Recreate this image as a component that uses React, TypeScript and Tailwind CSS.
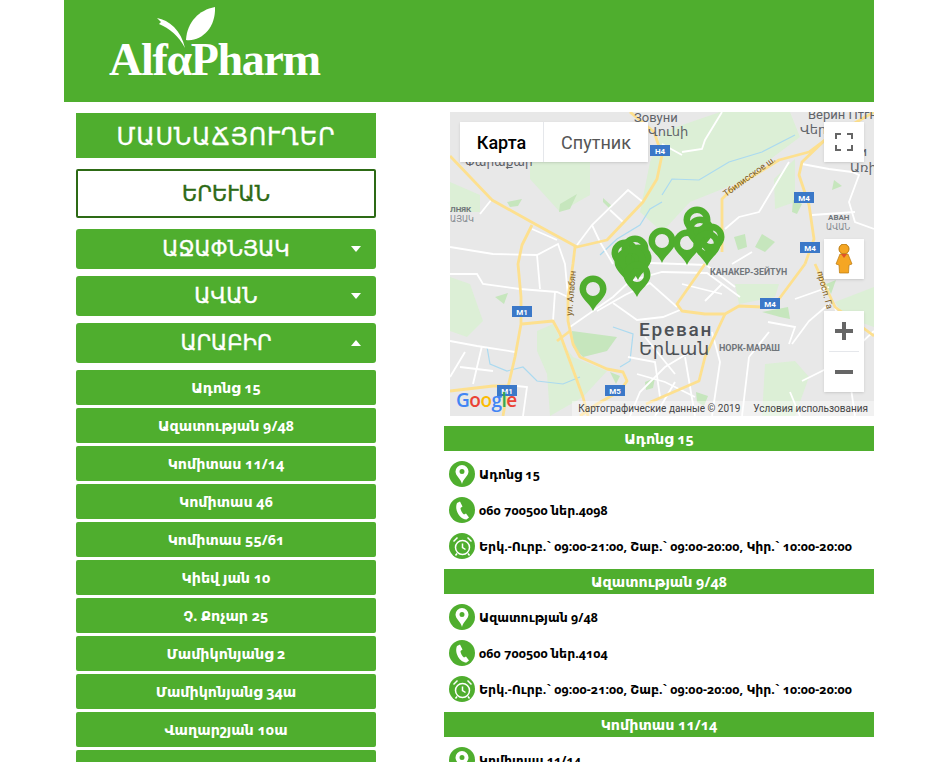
const items = ["Ադոնց 15","Ազատության 9/48","Կոմիտաս 11/14","Կոմիտաս 46","Կոմիտաս 55/61","Կիեվ յան 10","Չ. Քոչար 25","Մամիկոնյանց 2","Մամիկոնյանց 34ա","Վաղարշյան 10ա",""];
const HOURS = "Երկ.-Ուրբ.` 09:00-21:00, Շաբ.` 09:00-20:00, Կիր.` 10:00-20:00";
const stores = [["Ադոնց 15","060 700500 ներ.4098"],["Ազատության 9/48","060 700500 ներ.4104"],["Կոմիտաս 11/14",""]];

function Logo() {
  return (
    <div className="relative w-[214px] h-[80px] ml-[45px] mt-[6px]">
      <svg viewBox="0 0 214 80" className="absolute left-0 top-0 w-[214px] h-[80px]">
        <path d="M48 12 C60 14 72 24 76 42 C70 30 60 22 50 18 L52 16 Z" fill="#fff"/>
        <path d="M106 1 C90 4 78 16 77 34 C92 36 107 22 106 1 Z" fill="#fff"/>
      </svg>
      <span className="absolute left-0 top-[31px] text-[46px] leading-[46px] font-bold tracking-[-1.3px] text-white font-['Liberation_Serif',serif] whitespace-nowrap">AlfαPharm</span>
    </div>
  );
}

function Pin({ x, y }: { x: number; y: number }) {
  return <path transform={`translate(${x} ${y})`} fillRule="evenodd" fill="#4fae2e" d="M0 0C-3-8-13.500-13-13.500-22A13.500 13.500 0 1 1 13.500-22C13.500-13 3-8 0 0ZM0-29A7 7 0 1 0 0-15A7 7 0 1 0 0-29Z"/>;
}

const whites = [
  "M127 133L142 113L178 78L193 90","M142 113L150 130L163 152","M160 98L173 110","M30 102L42 87",
  "M0 135L43 142L87 143L108 132L115 152L118 185","M82 117L107 128","M87 143L90 177",
  "M0 162L27 162L33 172L70 177L107 180L118 185","M105 180L103 209",
  "M120 215L163 185L180 169L212 160L257 161L290 185","M147 199L175 183L200 171L227 195","M163 191L187 208L213 205L230 198","M200 151L257 153",
  "M0 229L27 234L65 240","M0 265L15 240","M32 234L23 272","M10 255L43 259","M67 274L77 275L73 304",
  "M180 304L190 280L215 255L240 240","M187 262L215 270L245 285","M205 304L225 270","M235 245L245 304","M178 245L205 250L210 285","M195 225L225 262",
  "M318 210L345 215L339 232","M299 245L319 220","M292 304L299 245","M342 232L359 209L379 192","M345 187L379 175","M352 269L392 249L424 219",
  "M232 40L252 37L255 28L272 0","M212 32L232 43","M275 117L289 105L309 100L339 50","M352 52L379 57L402 60L409 63L399 90L405 110L424 117","M362 103L405 100","M282 152L302 140",
  "M232 172L272 182","M255 152L285 175","M272 172L255 189","M340 280L350 304","M385 195L395 235L405 304","M262 220L270 250L262 304",
];
const yellows = [
  "M0 44L42 88L85 112L127 135L157 128L193 90L207 67L212 43L204 20L180 0",
  "M82 113L72 133L68 152L71 185L71 212L65 245L58 275L53 304",
  "M125 135L123 152L118 185L118 209L123 232L130 245L157 257L173 260L177 269L170 279L147 292L130 304",
  "M72 212L103 209L110 222L133 285L138 304","M107 229L120 219",
  "M0 279L43 274L58 274",
  "M272 140L272 87L282 77L329 48L359 40L375 28L410 8L424 0",
  "M255 152L227 192L232 199L255 202L275 202L289 194L312 195L329 187L355 152",
  "M355 152L364 127L359 93L349 63L352 50L375 28",
  "M275 202L255 245L249 269L219 282L196 292",
  "M365 152L385 195L424 224",
];
const pale = [
  "M80 50L140 50L140 83L110 100L80 67Z","M0 70L30 83L30 100L0 100Z",
  "M212 20L270 0L340 0L350 25L290 70L240 90L212 120L190 100L200 50Z","M324 67L345 47L345 90L325 97Z",
  "M0 165L20 172L33 209L17 225L0 219Z","M87 219L103 212L113 232L123 245L157 259L133 285L100 304L97 262L87 239Z",
  "M315 252L345 249L359 265L345 304L312 304Z","M285 172L329 172L325 185L289 192Z","M385 190L424 175L424 215L395 205Z",
];
const deep = [
  "M122 219L167 225L157 239L133 245L123 235Z","M57 90L72 87L68 94L60 95Z","M110 92L127 82L120 97L109 100Z","M153 86L162 94L160 97L153 90Z",
  "M284 125L295 122L297 135L288 138Z","M312 122L325 130L315 140L305 135Z","M384 68L392 74L382 78Z","M343 88L352 92L347 102L342 100Z","M45 185L58 181L54 192Z",
  "M312 200L338 195L340 207L330 205Z","M246 280L258 284L254 294L247 290Z","M376 172L386 168L381 182Z","M160 260L170 264L166 272Z","M195 270L205 266L203 276L196 278Z",
];

function MapArt() {
  return (
    <svg viewBox="0 0 424 304" className="absolute inset-0 w-[424px] h-[304px]">
      <rect width="424" height="304" fill="#e8e8e8"/>
      {pale.map((d) => <path key={d} d={d} fill="#dcefd6"/>)}
      {deep.map((d) => <path key={d} d={d} fill="#c6e6bd"/>)}
      <g fill="none" stroke="#abdaf0" strokeWidth="1.200">
        <path d="M212 83L222 67L249 68L279 50L312 40L345 23"/>
        <path d="M150 143L167 127L190 113L200 97L212 90"/>
        <path d="M37 235L40 252L57 259L73 255L87 269L113 272L130 265"/>
        <path d="M163 215L183 222L180 249L170 255"/>
      </g>
      <g fill="none" stroke="#ffffff" strokeWidth="1.800">
        {whites.map((d) => <path key={d} d={d}/>)}
      </g>
      <g fill="none" stroke="#fde08f" strokeWidth="2.800" strokeLinejoin="round">
        {yellows.map((d) => <path key={d} d={d}/>)}
      </g>
      <g fontFamily="Roboto, 'DejaVu Sans', sans-serif">
        <text x="184" y="10" fontSize="13" fill="#5f6368">Зовуни</text>
        <text x="198" y="24" fontSize="13" fill="#5f6368">Վունի</text>
        <text x="358" y="7" fontSize="13" fill="#5f6368">Верин Птгни</text>
        <text x="350" y="22" fontSize="13" fill="#5f6368">Վերին</text>
        <text x="402" y="44" fontSize="13" fill="#5f6368">ни</text>
        <text x="400" y="60" fontSize="13" fill="#5f6368">Առի</text>
        <text x="15" y="54" fontSize="12" fill="#5f6368">Փարաքար</text>
        <text x="0" y="100" fontSize="8" fontWeight="700" fill="#70757a">ЛНЯК</text>
        <text x="0" y="110" fontSize="8" fill="#80868b">ԱՅԱԿ</text>
        <text x="378" y="108" fontSize="8" fontWeight="700" fill="#70757a">АВАН</text>
        <text x="376" y="118" fontSize="8" fill="#80868b">ԱՎԱՆ</text>
        <text x="260" y="163" fontSize="8.800" fontWeight="700" fill="#70757a">КАНАКЕР-ЗЕЙТУН</text>
        <text x="269" y="239" fontSize="9" fontWeight="700" fill="#70757a">НОРК-МАРАШ</text>
        <text x="189" y="224" fontSize="19" fontWeight="500" letterSpacing="1.800" fill="#4d5156">Ереван</text>
        <text x="189" y="243" fontSize="18" letterSpacing=".5" fill="#4d5156">Երևան</text>
        <text transform="translate(122 204) rotate(-85)" fontSize="9" fill="#7a5a20">ул. Алабян</text>
        <text transform="translate(276 85) rotate(-36)" fontSize="9" fill="#7a5a20">Тбилисское ш.</text>
        <text transform="translate(367 160) rotate(75)" fontSize="9" fill="#7a5a20">просп. Га</text>
      </g>
      {[["Н4",210,38],["M4",354,85],["M4",360,135],["M4",320,191],["M1",72,199],["M1",57,278],["M5",165,278]].map(([t,a,b]) => (
        <g key={`${t}${a}`}>
          <rect x={Number(a)-10} y={Number(b)-5} width="20" height="11" fill="#3b78c8"/>
          <text x={Number(a)} y={Number(b)+4} textAnchor="middle" fontSize="8" fontWeight="700" fill="#fff" fontFamily="Roboto, sans-serif">{t}</text>
        </g>
      ))}
      <Pin x={143} y={199}/>
      <Pin x={175} y={163}/><Pin x={185} y={159}/><Pin x={178} y={172}/><Pin x={188} y={168}/><Pin x={182} y={170}/><Pin x={187} y={185}/>
      <Pin x={212} y={151}/><Pin x={237} y={153}/>
      <Pin x={247} y={130}/><Pin x={250} y={140}/><Pin x={261} y={147}/><Pin x={257} y={154}/>
      <text x="6" y="295" fontSize="19" fontWeight="600" fontFamily="'Open Sans', sans-serif" letterSpacing="-.5"><tspan fill="#4285f4">G</tspan><tspan fill="#ea4335">o</tspan><tspan fill="#fbbc05">o</tspan><tspan fill="#4285f4">g</tspan><tspan fill="#34a853">l</tspan><tspan fill="#ea4335">e</tspan></text>
    </svg>
  );
}

function MapControls() {
  return (
    <>
      <div className="absolute left-[10px] top-[10px] flex h-10 w-[188px] bg-white shadow-sm font-['Roboto',sans-serif] text-[18px]">
        <div className="w-[84px] flex items-center justify-center text-black font-medium border-r border-gray-200">Карта</div>
        <div className="flex-1 flex items-center justify-center text-[#565656]">Спутник</div>
      </div>
      <div className="absolute left-[374px] top-[10px] w-10 h-10 bg-white shadow-sm flex items-center justify-center">
        <svg width="18" height="18" viewBox="0 0 18 18" fill="none" stroke="#666" strokeWidth="2"><path d="M1 6V1H6M12 1H17V6M17 12V17H12M6 17H1V12"/></svg>
      </div>
      <div className="absolute left-[374px] top-[127px] w-10 h-10 bg-white shadow-sm flex items-center justify-center">
        <svg width="18" height="30" viewBox="0 0 18 30"><circle cx="9" cy="5" r="5" fill="#f5a623" stroke="#b97a10"/><path d="M5 10H13L17 20L14 21L13.500 29H4.500L4 21L1 20Z" fill="#f5a623" stroke="#b97a10" strokeWidth=".7"/><path d="M6 10L9 14L12 10" fill="#e0532a"/></svg>
      </div>
      <div className="absolute left-[374px] top-[199px] w-10 h-[81px] bg-white shadow-sm flex flex-col items-center">
        <div className="h-10 flex items-center"><svg width="18" height="18" viewBox="0 0 18 18"><path d="M7 0H11V7H18V11H11V18H7V11H0V7H7Z" fill="#666"/></svg></div>
        <div className="w-[30px] h-px bg-gray-200"/>
        <div className="h-10 flex items-center"><svg width="18" height="18" viewBox="0 0 18 18"><path d="M0 7H18V11H0Z" fill="#666"/></svg></div>
      </div>
      <div className="absolute right-0 bottom-0 h-[15px] flex items-center gap-[13px] px-[6px] bg-white/40 font-['Roboto',sans-serif] text-[10px] text-[#444] whitespace-nowrap">
        <span>Картографические данные © 2019</span><span>Условия использования</span>
      </div>
    </>
  );
}

function Circle({ kind }: { kind: string }) {
  return (
    <div className="w-[26px] h-[26px] rounded-full bg-[#4fae2e] flex items-center justify-center shrink-0">
      {kind === "pin" && <svg width="14" height="19" viewBox="0 0 14 19"><path fillRule="evenodd" fill="#fff" d="M7 19C6 14 .5 11 .5 6.500A6.500 6.500 0 1 1 13.500 6.500C13.500 11 8 14 7 19ZM7 4A2.500 2.500 0 1 0 7 9A2.500 2.500 0 1 0 7 4Z"/></svg>}
      {kind === "phone" && <svg width="16" height="19" viewBox="0 0 16 19"><path fill="#fff" d="M3 2L6 .5L8.500 5.500L6.500 7C6.500 9 8 12 10 13.500L12 12.500L15 16.500L12.500 18.500C6 18.500 0 9 3 2Z"/></svg>}
      {kind === "clock" && <svg width="21" height="21" viewBox="0 0 21 21" fill="none" stroke="#fff" strokeWidth="1.500"><circle cx="10.500" cy="11.500" r="7"/><path d="M10.500 7.500V11.500L13.500 13.500M1.500 5.500L5.500 1.500M19.500 5.500L15.500 1.500M5 17.500L3.500 19.500M16 17.500L17.500 19.500"/></svg>}
    </div>
  );
}

function Row({ kind, text }: { kind: string; text: string }) {
  return (
    <div className="h-[36px] flex items-center gap-1 pl-[5px] text-[12.500px] font-bold text-black whitespace-nowrap oldstyle-nums">
      <Circle kind={kind}/><span className="pt-[2px]">{text}</span>
    </div>
  );
}

export default function App() {
  return (
    <div className="h-[762px] overflow-hidden bg-white font-['Noto_Sans','DejaVu_Sans',sans-serif]">
      <div className="w-[810px] mx-auto">
        <header className="h-[102px] bg-[#4fae2e] flex"><Logo/></header>
        <div className="flex">
          <aside className="w-[300px] ml-3 mt-[11px] flex flex-col text-white text-center">
            <div className="h-[45px] bg-[#4fae2e] flex items-center justify-center text-[24px] [-webkit-text-stroke:0.3px] tracking-[0.8px]">ՄԱՍՆԱՃՅՈՒՂԵՐ</div>
            <div className="h-[49px] mt-[11px] rounded-[2px] border-2 border-[#2d6a15] bg-white flex items-center justify-center text-[21px] [-webkit-text-stroke:0.4px] text-[#2d6a15]">ԵՐԵՒԱՆ</div>
            {["ԱՋԱՓՆՅԱԿ","ԱՎԱՆ","ԱՐԱԲԻՐ"].map((t, i) => (
              <div key={t} className={`relative h-10 rounded-[3px] bg-[#4fae2e] flex items-center justify-center text-[21px] [-webkit-text-stroke:0.4px] ${i === 0 ? "mt-[11px]" : "mt-[7px]"}`}>
                {t}
                <span className={`absolute right-[15px] top-[17px] w-0 h-0 border-x-[5px] border-x-transparent ${i === 2 ? "border-b-[6px] border-b-white" : "border-t-[6px] border-t-white"}`}/>
              </div>
            ))}
            <div className="mt-[7px] flex flex-col gap-[3px] oldstyle-nums">
              {items.map((t, i) => (
                <div key={i} className="h-[35px] shrink-0 rounded-[2px] bg-[#4fae2e] flex items-center justify-center text-[14.300px] font-bold">{t}</div>
              ))}
            </div>
          </aside>
          <main className="w-[430px] ml-[68px] mt-[10px]">
            <div className="relative ml-[6px] w-[424px] h-[304px] overflow-hidden"><MapArt/><MapControls/></div>
            <div className="mt-[10px]">
              {stores.map(([name, phone]) => (
                <section key={name}>
                  <h2 className="h-[25px] bg-[#4fae2e] text-white text-[14.300px] font-bold flex items-center justify-center oldstyle-nums">{name}</h2>
                  <div className="pt-[5px] h-[118px]">
                    <Row kind="pin" text={name}/>
                    <Row kind="phone" text={phone}/>
                    <Row kind="clock" text={HOURS}/>
                  </div>
                </section>
              ))}
            </div>
          </main>
        </div>
      </div>
    </div>
  );
}
